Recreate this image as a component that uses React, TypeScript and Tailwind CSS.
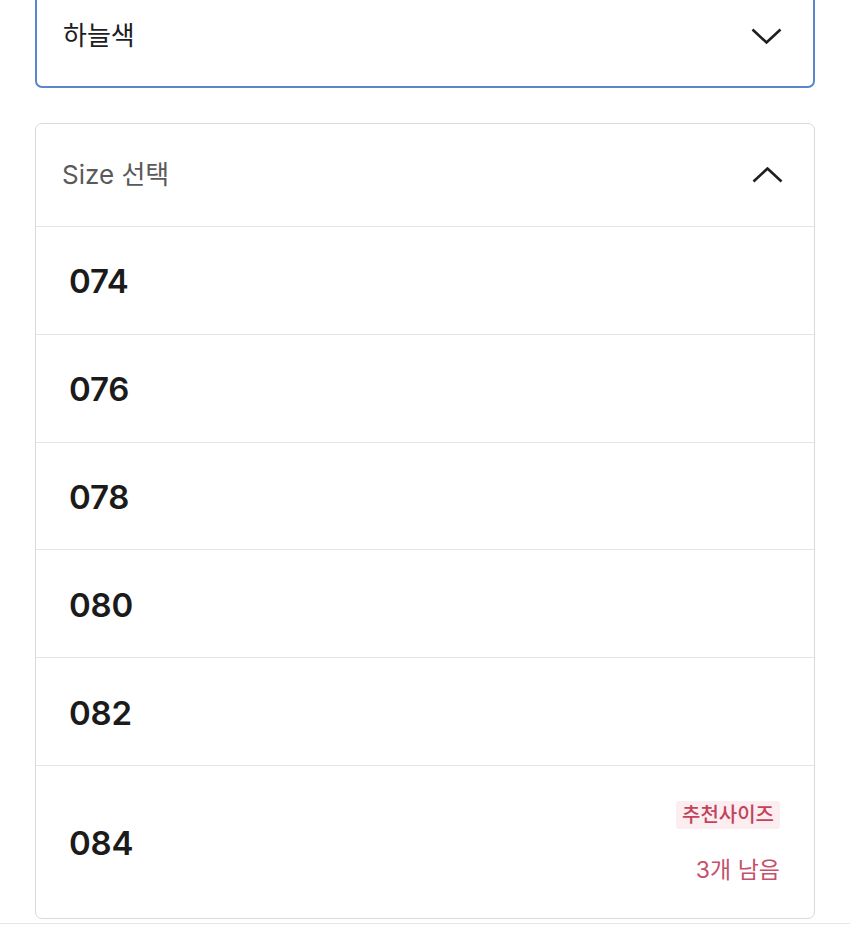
import { ReactNode } from 'react'

const FONT = "font-['Inter','Noto_Sans_CJK_KR',sans-serif]"

const sizes = ['074', '076', '078', '080', '082']

function Chevron({ up = false }: { up?: boolean }) {
  return (
    <svg width="31" height="16" viewBox="0 0 31 16" fill="none" className="shrink-0">
      <path
        d={up ? 'M1.5 14.5 L15.5 1.5 L29.5 14.5' : 'M1.5 1.5 L15.5 14.5 L29.5 1.5'}
        stroke="#1f1f1f"
        strokeWidth="2.6"
      />
    </svg>
  )
}

function SizeRow({ label, children, tall = false }: { label: string; children?: ReactNode; tall?: boolean }) {
  return (
    <div
      className={`flex items-center justify-between border-t border-[#e4e4e4] pl-[33px] pr-[34px] ${
        tall ? 'h-[153px]' : 'h-[107.8px]'
      }`}
    >
      <span className="mt-[3px] text-[33px] font-semibold leading-none tracking-[-0.2px] text-[#1b1b1b]">{label}</span>
      {children}
    </div>
  )
}

export default function App() {
  return (
    <div className={`min-h-[938px] bg-white ${FONT}`}>
      <div className="px-[35px]">

        {/* Color select */}

        <div className="-mt-4 flex h-[104px] items-center justify-between rounded-[7px] border-2 border-[#5b86c9] pl-[26px] pr-[31px]">
          <span className="text-[26px] leading-none text-[#1d1d1d]">하늘색</span>
          <Chevron />
        </div>

        {/* Size list */}

        <div className="mt-[35px] overflow-hidden rounded-[7px] border border-[#d9d9d9]">
          <div className="flex h-[102px] items-center justify-between pl-[26px] pr-[31px]">
            <span className="text-[26px] leading-none text-[#5a5a5a]">Size 선택</span>
            <Chevron up />
          </div>

          {sizes.map((s) => (
            <SizeRow key={s} label={s} />
          ))}

          <SizeRow label="084" tall>
            <div className="flex flex-col items-end">
              <span className="flex h-[28px] items-center rounded-[3px] bg-[#fcedf0] px-[6px] text-[20px] font-medium text-[#c2435b]">
                추천사이즈
              </span>
              <span className="mt-[30px] text-[23px] leading-none text-[#c4526a]">3개 남음</span>
            </div>
          </SizeRow>
        </div>
      </div>

      <div className="mt-[4px] border-t border-[#e6e6e6]" />
    </div>
  )
}
